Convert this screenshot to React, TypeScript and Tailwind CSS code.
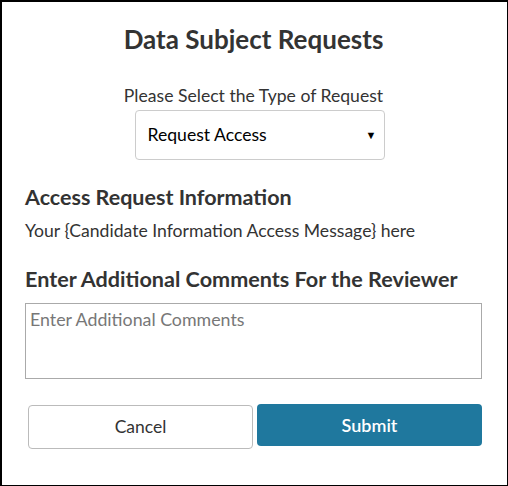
import React, { useState } from 'react';

const font = { fontFamily: '"Lato", "Open Sans", sans-serif' };

const App: React.FC = () => {
  const [type, setType] = useState('access');
  const [comments, setComments] = useState('');

  return (
    <div className="w-[508px] h-[486px] bg-white" style={font}>
      <div className="h-full border-2 border-r border-b-[1px] border-black pl-[23px] pr-[25px] pt-[21px] text-[#333]">
        <h1 className="text-center text-[26px] leading-[32px] font-bold text-[#333]">
          Data Subject Requests
        </h1>

        <div className="mt-[30px] flex flex-col items-center">
          <label className="text-[17.6px] leading-[22px]">Please Select the Type of Request</label>
          <div className="relative mt-[3px] ml-[12px]">
            <select
              value={type}
              onChange={(e) => setType(e.target.value)}
              className="appearance-none w-[250px] h-[50px] pl-[12px] pr-8 bg-white border border-[#ccc] rounded-[4px] text-[17.6px] text-black outline-none"
            >
              <option value="access">Request Access</option>
              <option value="delete">Request Deletion</option>
            </select>
            <span className="pointer-events-none absolute right-[8px] top-1/2 -translate-y-1/2 text-[11px] text-black">▼</span>
          </div>
        </div>

        <h2 className="mt-[23px] text-[21.5px] leading-[28px] font-bold">Access Request Information</h2>
        <p className="mt-[9px] text-[17.6px] leading-[22px]">Your {'{'}Candidate Information Access Message{'}'} here</p>

        <h2 className="mt-[23px] text-[21.6px] leading-[28px] font-bold">Enter Additional Comments For the Reviewer</h2>
        <textarea
          value={comments}
          onChange={(e) => setComments(e.target.value)}
          placeholder="Enter Additional Comments"
          className="mt-[10px] block w-full h-[76px] px-[4px] py-[4px] border border-[#aaa] text-[17.8px] leading-[22px] placeholder:text-[#777] outline-none resize-none"
        />

        <div className="mt-[25px] flex items-start gap-[4px] pl-[3px]">
          <button className="w-[225px] h-[44px] border border-[#bbb] rounded-[4px] bg-white text-[17.5px] text-[#333] mt-[1px]">
            Cancel
          </button>
          <button className="w-[225px] h-[42px] rounded-[4px] bg-[#1f789e] text-[18px] font-semibold text-white">
            Submit
          </button>
        </div>
      </div>
    </div>
  );
};

export default App;
